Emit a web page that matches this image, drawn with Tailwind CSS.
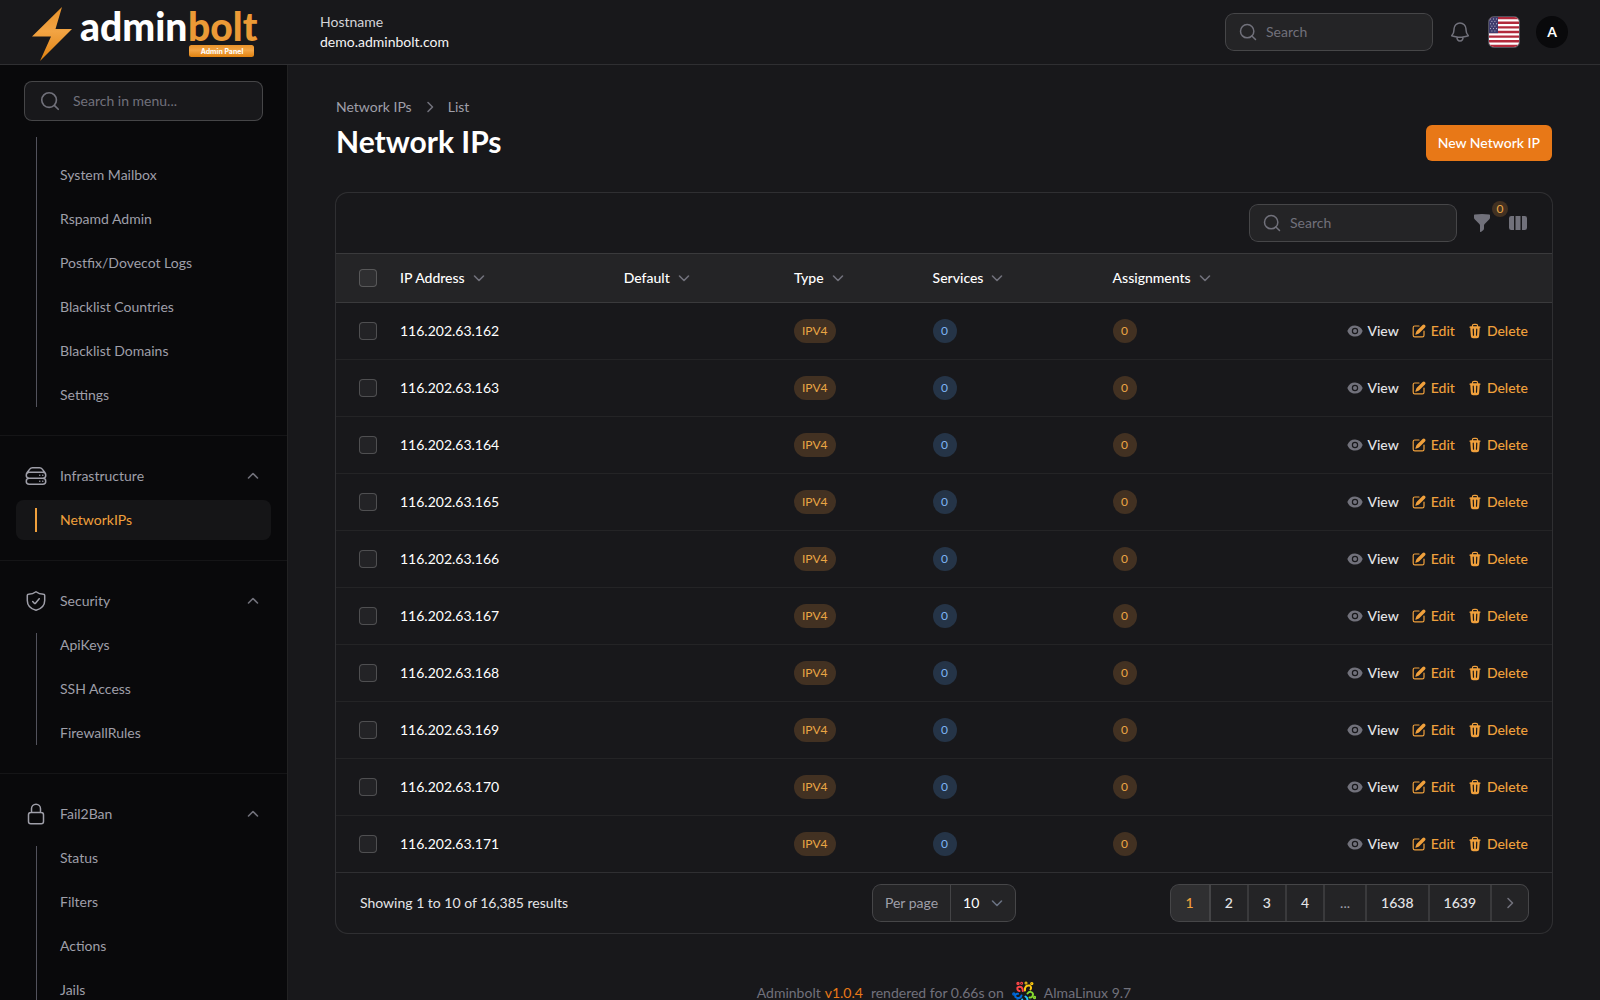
<!DOCTYPE html>
<html lang="en">
<head>
    <meta charset="UTF-8">
    <meta name="viewport" content="width=device-width, initial-scale=1.0">
    <title>Network IPs - Adminbolt</title>
    <script src="https://cdn.jsdelivr.net/npm/@tailwindcss/browser@4"></script>
</head>
<body class="h-screen flex flex-col overflow-hidden bg-zinc-900 text-white text-sm font-['Lato','Open_Sans',sans-serif]">

    <!-- Icon sprite -->
    <svg class="hidden" xmlns="http://www.w3.org/2000/svg">
        <symbol id="i-search" viewBox="0 0 24 24" fill="none" stroke="currentColor" stroke-width="1.8" stroke-linecap="round">
            <circle cx="11" cy="11" r="8"/><path d="m21 21-4.3-4.3"/>
        </symbol>
        <symbol id="i-down" viewBox="0 0 20 20" fill="none" stroke="currentColor" stroke-width="1.6" stroke-linecap="round" stroke-linejoin="round"><path d="m5.5 8 4.5 4.5L14.5 8"/></symbol>
        <symbol id="i-up" viewBox="0 0 20 20" fill="none" stroke="currentColor" stroke-width="1.6" stroke-linecap="round" stroke-linejoin="round"><path d="M5.5 12 10 7.5l4.5 4.5"/></symbol>
        <symbol id="i-right" viewBox="0 0 20 20" fill="none" stroke="currentColor" stroke-width="1.6" stroke-linecap="round" stroke-linejoin="round"><path d="M8 5.5 12.5 10 8 14.5"/></symbol>
        <symbol id="i-eye" viewBox="0 0 20 20" fill="currentColor">
            <path d="M10 12.5a2.5 2.5 0 1 0 0-5 2.5 2.5 0 0 0 0 5Z"/>
            <path fill-rule="evenodd" d="M.664 10.59a1.651 1.651 0 0 1 0-1.186A10.004 10.004 0 0 1 10 3c4.257 0 7.893 2.66 9.336 6.41.147.381.146.804 0 1.186A10.004 10.004 0 0 1 10 17c-4.257 0-7.893-2.66-9.336-6.41ZM14 10a4 4 0 1 1-8 0 4 4 0 0 1 8 0Z" clip-rule="evenodd"/>
        </symbol>
        <symbol id="i-edit" viewBox="0 0 20 20" fill="currentColor">
            <path d="m5.433 13.917 1.262-3.155A4 4 0 0 1 7.58 9.42l6.92-6.918a2.121 2.121 0 0 1 3 3l-6.92 6.918c-.383.383-.84.685-1.343.886l-3.154 1.262a.5.5 0 0 1-.65-.65Z"/>
            <path d="M3.5 5.75c0-.69.56-1.25 1.25-1.25H10A.75.75 0 0 0 10 3H4.75A2.75 2.75 0 0 0 2 5.75v9.5A2.75 2.75 0 0 0 4.75 18h9.5A2.75 2.75 0 0 0 17 15.25V10a.75.75 0 0 0-1.5 0v5.25c0 .69-.56 1.25-1.25 1.25h-9.5c-.69 0-1.25-.56-1.25-1.25v-9.5Z"/>
        </symbol>
        <symbol id="i-trash" viewBox="0 0 20 20" fill="currentColor">
            <path fill-rule="evenodd" clip-rule="evenodd" d="M8.75 1A2.75 2.75 0 0 0 6 3.75v.443c-.795.077-1.584.176-2.365.298a.75.75 0 1 0 .23 1.482l.149-.022.841 10.518A2.75 2.75 0 0 0 7.596 19h4.807a2.75 2.75 0 0 0 2.742-2.53l.841-10.52.149.023a.75.75 0 0 0 .23-1.482A41.03 41.03 0 0 0 14 4.193V3.75A2.75 2.75 0 0 0 11.25 1h-2.5ZM10 4c.84 0 1.673.025 2.5.075V3.75c0-.69-.56-1.25-1.25-1.25h-2.5c-.69 0-1.25.56-1.25 1.25v.325C8.327 4.025 9.16 4 10 4ZM8.58 7.72a.75.75 0 0 0-1.5.06l.3 7.5a.75.75 0 1 0 1.5-.06l-.3-7.5Zm4.34.06a.75.75 0 1 0-1.5-.06l-.3 7.5a.75.75 0 1 0 1.5.06l.3-7.5Z"/>
        </symbol>
    </svg>

    <!-- Topbar -->
    <header class="shrink-0 h-[65px] flex items-center border-b border-white/10 pr-8">
        <a href="#" aria-label="Adminbolt" class="w-72 shrink-0">
            <svg class="w-72 h-16" viewBox="0 0 288 64">
                <defs>
                    <linearGradient id="bolt" x1="0" y1="0" x2="0" y2="1">
                        <stop offset="0" stop-color="#e8922a"/><stop offset=".45" stop-color="#f2a444"/><stop offset="1" stop-color="#e0810f"/>
                    </linearGradient>
                </defs>
                <path fill="url(#bolt)" d="M62 7 55.5 29h16.5L40 61l11-24.500H32Z"/>
                <g font-family="Lato" font-weight="900" font-size="39">
                    <text x="80" y="41" fill="#fff">admin</text>
                    <text x="188" y="41" fill="#eb9a36">bolt</text>
                </g>
                <rect x="189" y="45" width="65" height="12" rx="2.5" fill="url(#bolt)"/>
                <text x="222" y="54" fill="#fff" text-anchor="middle" font-family="Inter" font-weight="700" font-size="7">Admin Panel</text>
            </svg>
        </a>
        <div class="ml-8 leading-5">
            <p class="text-zinc-300">Hostname</p>
            <p class="text-zinc-100">demo.adminbolt.com</p>
        </div>
        <div class="ml-auto flex items-center gap-4">
            <label class="flex items-center gap-2 w-[206px] h-9 px-3 rounded-lg bg-white/5 ring-1 ring-white/20">
                <svg class="size-5 shrink-0 text-zinc-500"><use href="#i-search"/></svg>
                <input type="search" aria-label="Global search" placeholder="Search" class="w-full min-w-0 bg-transparent outline-none placeholder:text-zinc-500">
            </label>
            <button type="button" aria-label="Notifications" class="text-zinc-500">
                <svg class="size-6" viewBox="0 0 24 24" fill="none" stroke="currentColor" stroke-width="1.5" stroke-linecap="round" stroke-linejoin="round"><path d="M14.857 17.082a23.848 23.848 0 0 0 5.454-1.31A8.967 8.967 0 0 1 18 9.75V9A6 6 0 0 0 6 9v.75a8.967 8.967 0 0 1-2.312 6.022c1.733.64 3.56 1.085 5.455 1.31m5.714 0a24.255 24.255 0 0 1-5.714 0m5.714 0a3 3 0 1 1-5.714 0"/></svg>
            </button>
            <button type="button" aria-label="Language" class="size-8 rounded-md overflow-hidden border border-zinc-600">
                <svg class="size-full" viewBox="0 0 30 30">
                    <rect width="30" height="30" fill="#fff"/>
                    <path stroke="#b22a3c" stroke-width="2.31" d="M0 1.15h30M0 5.77h30M0 10.38h30M0 15h30M0 19.62h30M0 24.23h30M0 28.85h30"/>
                    <rect width="9" height="16.15" fill="#3e3d6e"/>
                    <path stroke="#fff" stroke-width=".8" stroke-dasharray=".8 2.2" d="M1 2h8M2.5 4.4h6M1 6.8h8M2.5 9.2h6M1 11.6h8M2.5 14h6"/>
                </svg>
            </button>
            <button type="button" aria-label="User menu" class="size-8 rounded-full bg-zinc-950 font-bold">A</button>
        </div>
    </header>

    <div class="flex flex-1 min-h-0">

        <!-- Sidebar -->
        <aside class="w-72 shrink-0 flex flex-col bg-zinc-950 border-r border-white/10 text-zinc-400">
            <label class="mx-6 my-4 shrink-0 flex items-center gap-3 h-10 px-3.5 rounded-lg bg-zinc-900 border border-white/20">
                <svg class="size-[22px] shrink-0 text-zinc-500"><use href="#i-search"/></svg>
                <input type="search" aria-label="Search in menu" placeholder="Search in menu..." class="w-full min-w-0 bg-transparent outline-none placeholder:text-zinc-500">
            </label>
            <nav id="menu" class="flex-1 min-h-0 overflow-hidden"></nav>
        </aside>

        <!-- Content -->
        <main class="flex-1 min-w-0 overflow-y-auto [scrollbar-width:none] px-12 pt-8">
            <nav aria-label="Breadcrumb" class="flex items-center gap-2 leading-5 text-zinc-400">
                <a href="#">Network IPs</a>
                <svg class="size-5 text-zinc-500"><use href="#i-right"/></svg>
                <a href="#">List</a>
            </nav>
            <div class="mt-2 flex items-center justify-between">
                <h1 class="text-3xl leading-8 font-bold self-start">Network IPs</h1>
                <a href="#" class="h-9 px-3 flex items-center rounded-md bg-[#e87817] font-medium">New Network IP</a>
            </div>

            <!-- Table card -->
            <section class="mt-8 rounded-xl ring-1 ring-white/10">
                <div class="flex items-center justify-end gap-4 px-6 py-3">
                    <label class="flex items-center gap-2 w-[206px] h-9 px-3 rounded-lg bg-white/5 ring-1 ring-white/20">
                        <svg class="size-5 shrink-0 text-zinc-500"><use href="#i-search"/></svg>
                        <input type="search" aria-label="Search table" placeholder="Search" class="w-full min-w-0 bg-transparent outline-none placeholder:text-zinc-500">
                    </label>
                    <button type="button" aria-label="Filter" class="relative text-zinc-500">
                        <svg class="size-5" viewBox="0 0 20 20" fill="currentColor"><path d="M2.628 1.601C5.028 1.206 7.49 1 10 1s4.973.206 7.372.601a.75.75 0 0 1 .628.74v2.288a2.25 2.25 0 0 1-.659 1.59l-4.682 4.683a2.25 2.25 0 0 0-.659 1.59v3.037c0 .684-.31 1.33-.844 1.757l-1.937 1.55A.75.75 0 0 1 8 18.25v-5.757a2.25 2.25 0 0 0-.659-1.591L2.659 6.22A2.25 2.25 0 0 1 2 4.629V2.34a.75.75 0 0 1 .628-.74Z"/></svg>
                        <span class="absolute -top-3 -right-4 size-4 rounded-full bg-[#423122] text-[#eaa645] text-xs leading-4 text-center">0</span>
                    </button>
                    <button type="button" aria-label="Toggle columns" class="text-zinc-500">
                        <svg class="size-5" viewBox="0 0 20 20" fill="currentColor"><path d="M14 17h2.75A2.25 2.25 0 0 0 19 14.75v-9.5A2.25 2.25 0 0 0 16.75 3H14v14ZM12.5 3h-5v14h5V3ZM3.25 3H6v14H3.25A2.25 2.25 0 0 1 1 14.75v-9.5A2.25 2.25 0 0 1 3.25 3Z"/></svg>
                    </button>
                </div>

                <table class="w-full table-fixed border-separate border-spacing-0">
                    <colgroup>
                        <col class="w-[52px]">
                        <col class="w-[18.4%]">
                        <col class="w-[14%]">
                        <col class="w-[11.4%]">
                        <col class="w-[14.8%]">
                        <col>
                        <col class="w-[250px]">
                    </colgroup>
                    <thead class="bg-white/5">
                        <tr id="head"></tr>
                    </thead>
                    <tbody id="rows"></tbody>
                </table>

                <div class="grid grid-cols-[1fr_auto_1fr] items-center border-t border-white/10 px-6 py-3">
                    <p class="text-zinc-200">Showing 1 to 10 of 16,385 results</p>
                    <div class="flex items-center h-9 rounded-lg bg-white/5 ring-1 ring-white/20">
                        <label for="perPage" class="h-9 px-3 leading-9 text-zinc-400 border-r border-white/15">Per page</label>
                        <div class="relative">
                            <select id="perPage" class="block appearance-none h-9 w-16 pl-3 bg-transparent outline-none">
                                <option>10</option>
                                <option>25</option>
                                <option>50</option>
                            </select>
                            <svg class="absolute right-2 top-2 size-5 text-gray-500 pointer-events-none"><use href="#i-down"/></svg>
                        </div>
                    </div>
                    <nav aria-label="Pagination" class="justify-self-end flex h-9 rounded-lg bg-white/5 ring-1 ring-white/20 divide-x-2 divide-white/10 leading-9 font-medium text-zinc-200 overflow-hidden">
                        <a href="#" class="px-[15px] bg-white/5 text-[#f0a03c]">1</a>
                        <a href="#" class="px-3.5">2</a>
                        <a href="#" class="px-3.5">3</a>
                        <a href="#" class="px-3.5">4</a>
                        <span class="px-[15px] text-zinc-400">...</span>
                        <a href="#" class="px-3.5">1638</a>
                        <a href="#" class="px-3.5">1639</a>
                        <a href="#" aria-label="Next" class="px-2 flex items-center text-zinc-500"><svg class="size-5"><use href="#i-right"/></svg></a>
                    </nav>
                </div>
            </section>

            <footer class="mt-12 h-6 flex items-center justify-center text-zinc-500">
                <span>Adminbolt</span>
                <a href="#" class="ml-1 mr-2 text-[#e87817]">v1.0.4</a>
                <span>rendered for 0.66s on</span>
                <svg class="size-6 mx-2" viewBox="0 0 24 24" fill="none" stroke-width="2" stroke-linecap="round">
                    <g stroke="#ff4649"><path d="M5.500 6.500C8.500 4.500 11 6.500 10.800 10M5.500 6.500C5 8.500 6 9.800 7.500 10"/><circle cx="6" cy="2.500" r=".7"/><circle cx="9.600" cy="2.200" r=".5"/></g>
                    <g stroke="#ffcb12"><path d="M13 9.500C12.500 6 14.500 4 17.500 4.500M17.500 4.500C19.200 5.500 19.500 7 18.500 8.500"/><circle cx="14" cy="2" r=".5"/><circle cx="19.800" cy="2.600" r=".7"/></g>
                    <g stroke="#86da2f"><path d="M15.500 12.500C17.500 10 20.500 10.500 21 13M21 13C21 15.500 19.500 17 17.500 16.500"/><circle cx="22.500" cy="16.500" r=".7"/></g>
                    <g stroke="#24c2ff"><path d="M13.500 15.500C16 17 16 19.500 14 21M14 21C11.500 22 10 20.500 10.200 18.500"/><circle cx="18" cy="20.500" r=".7"/></g>
                    <g stroke="#0069da"><path d="M9.500 14.500C9 17 6 18 3.500 16M3.500 16C2.500 14 4 12.500 6 12.800"/><circle cx="1.800" cy="13" r=".7"/><circle cx="5.500" cy="20" r=".7"/></g>
                </svg>
                <span>AlmaLinux 9.7</span>
            </footer>
        </main>
    </div>

    <script>
        const groupIcons = {
            Infrastructure: 'M5.25 14.25h13.5m-13.5 0a3 3 0 0 1-3-3m3 3a3 3 0 1 0 0 6h13.5a3 3 0 1 0 0-6m-16.5-3a3 3 0 0 1 3-3h13.5a3 3 0 0 1 3 3m-19.5 0a4.5 4.5 0 0 1 .9-2.7L5.737 5.1a3.375 3.375 0 0 1 2.7-1.35h7.126c1.062 0 2.062.5 2.7 1.35l2.587 3.45a4.5 4.5 0 0 1 .9 2.7m0 0a3 3 0 0 1-3 3m0 3h.008v.008h-.008v-.008Zm0-6h.008v.008h-.008v-.008Zm-3 6h.008v.008h-.008v-.008Zm0-6h.008v.008h-.008v-.008Z',
            Security: 'M12 2.75C9.8 4.35 7.2 5.15 4.4 5.35a1.1 1.1 0 0 0-1.1 1.1v5c0 4.6 3.4 8.3 8.7 9.8 5.3-1.5 8.7-5.2 8.7-9.8v-5a1.1 1.1 0 0 0-1.1-1.1C16.8 5.15 14.2 4.35 12 2.75ZM8.7 12.6l1.6 1.7c.4.4.9.4 1.2 0l3.7-4.6',
            Fail2Ban: 'M16.5 10.5V6.75a4.5 4.5 0 1 0-9 0v3.75m-.75 11.25h10.5a2.25 2.25 0 0 0 2.25-2.25v-6.75a2.25 2.25 0 0 0-2.25-2.25H6.75a2.25 2.25 0 0 0-2.25 2.25v6.75a2.25 2.25 0 0 0 2.25 2.25Z'
        };

        const groups = [
            { items: ['System Mailbox', 'Rspamd Admin', 'Postfix/Dovecot Logs', 'Blacklist Countries', 'Blacklist Domains', 'Settings'] },
            { name: 'Infrastructure', items: ['NetworkIPs'], active: 'NetworkIPs' },
            { name: 'Security', items: ['ApiKeys', 'SSH Access', 'FirewallRules'] },
            { name: 'Fail2Ban', items: ['Status', 'Filters', 'Actions', 'Jails'] }
        ];

        document.getElementById('menu').innerHTML = groups.map(g => {
            const header = g.name ? `
                <button type="button" class="w-full h-10 mb-1 px-2 flex items-center gap-3">
                    <svg class="size-6" viewBox="0 0 24 24" fill="none" stroke="currentColor" stroke-width="1.5" stroke-linecap="round" stroke-linejoin="round"><path d="${groupIcons[g.name]}"/></svg>
                    <span>${g.name}</span>
                    <svg class="size-5 ml-auto text-zinc-500"><use href="#i-up"/></svg>
                </button>` : '';
            const line = g.active ? '' : `<span class="absolute left-5 bottom-2 w-px bg-zinc-600 ${g.name ? 'top-2' : 'top-0'}"></span>`;
            const items = g.items.map(item => item === g.active
                ? `<li><a href="#" class="h-10 flex items-center rounded-lg bg-white/5 text-[#f0a03c]"><span class="ml-[19px] w-0.5 h-6 bg-[#f0a03c]"></span><span class="ml-[23px]">${item}</span></a></li>`
                : `<li><a href="#" class="h-10 flex items-center pl-11">${item}</a></li>`).join('');
            return `
                <div class="px-4 pb-5 ${g.name ? 'pt-5 border-t border-white/5' : ''}">
                    ${header}
                    <ul class="relative flex flex-col gap-1 ${g.name ? '' : 'pt-[18px]'}">${line}${items}</ul>
                </div>`;
        }).join('');

        const checkbox = label => `<input type="checkbox" aria-label="${label}" class="block ml-[23px] size-[18px] appearance-none rounded-sm bg-white/5 border border-white/20">`;

        document.getElementById('head').innerHTML =
            `<th class="h-[50px] border-y border-white/10">${checkbox('Select all')}</th>` +
            ['IP Address', 'Default', 'Type', 'Services', 'Assignments'].map(c => `
                <th class="px-3 border-y border-white/10 text-left font-medium">
                    <button type="button" class="flex items-center gap-1">${c}<svg class="size-5 text-zinc-500"><use href="#i-down"/></svg></button>
                </th>`).join('') +
            '<th class="border-y border-white/10"></th>';

        const amber = 'inline-block h-6 min-w-6 px-2 rounded-full text-center text-xs leading-6 bg-[#423122] text-[#eaa645]';
        const blue = 'inline-block h-6 min-w-6 px-2 rounded-full text-center text-xs leading-6 bg-[#253447] text-[#7db4f5]';
        const rows = [162, 163, 164, 165, 166, 167, 168, 169, 170, 171];

        document.getElementById('rows').innerHTML = rows.map((n, i) => {
            const last = i === rows.length - 1;
            const line = last ? '' : 'border-b border-white/5';
            return `
                <tr>
                    <td class="${last ? 'h-14' : 'h-[57px]'} ${line}">${checkbox('Select 116.202.63.' + n)}</td>
                    <td class="px-3 ${line}">116.202.63.${n}</td>
                    <td class="px-3 ${line}"></td>
                    <td class="px-3 ${line}"><span class="${amber}">IPV4</span></td>
                    <td class="px-3 ${line}"><span class="${blue}">0</span></td>
                    <td class="px-3 ${line}"><span class="${amber}">0</span></td>
                    <td class="pr-6 ${line}">
                        <div class="flex justify-end gap-3 font-medium text-[#f0a03c]">
                            <a href="#" class="flex items-center gap-1 text-zinc-200"><svg class="size-4 text-zinc-500"><use href="#i-eye"/></svg>View</a>
                            <a href="#" class="flex items-center gap-1"><svg class="size-4"><use href="#i-edit"/></svg>Edit</a>
                            <a href="#" class="flex items-center gap-1"><svg class="size-4"><use href="#i-trash"/></svg>Delete</a>
                        </div>
                    </td>
                </tr>`;
        }).join('');
    </script>
</body>
</html>
